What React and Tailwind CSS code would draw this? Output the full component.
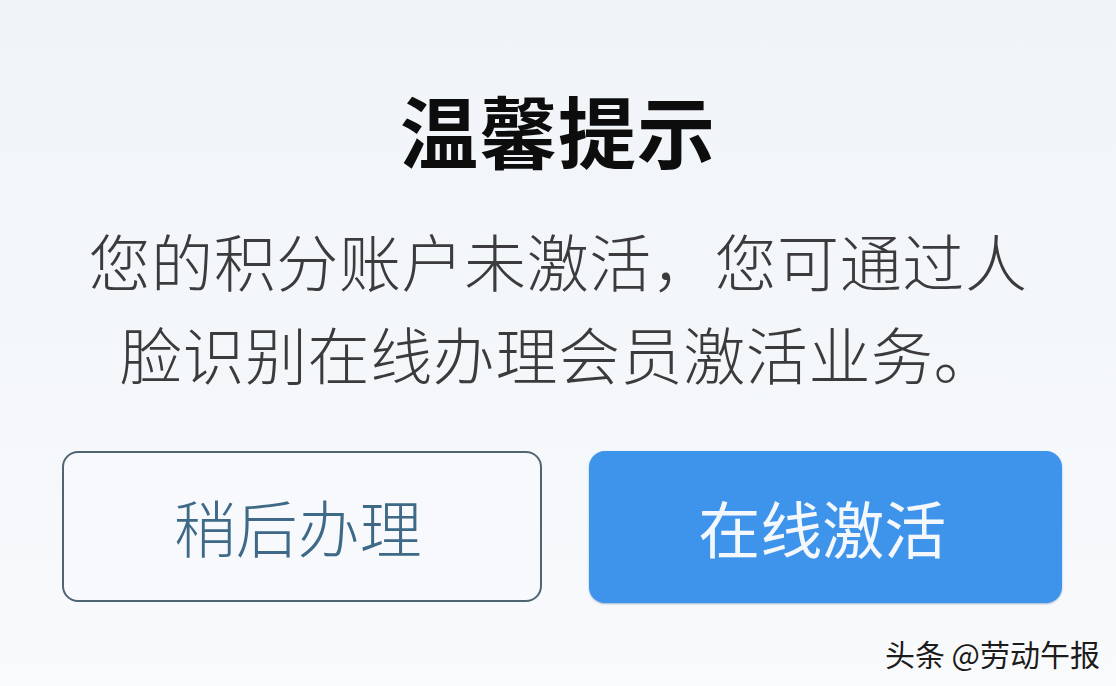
import React from 'react';

const cjk = { fontFamily: '"Noto Sans CJK SC", "Noto Sans", sans-serif' };

export default function App() {
  return (
    <div
      className="relative w-full h-[686px] overflow-hidden bg-gradient-to-b from-[#f0f4f8] to-[#f8fafc]"
      style={cjk}
    >
      <div className="flex flex-col items-center pt-[90px]">
        <h1 className="text-[78px] leading-none font-bold text-[#0d0d0d] tracking-[1px]">温馨提示</h1>
        <p className="mt-[46px] w-[980px] text-center text-[62px] leading-[93px] tracking-[0.6px] text-[#3b3a3d] font-light">
          您的积分账户未激活，您可通过人脸识别在线办理会员激活业务。
        </p>
      </div>

      <div className="flex gap-[47px] pl-[62px] pr-[54px] mt-[51px]">
        <button className="flex-1 h-[151px] rounded-[16px] border-2 border-[#4f6672] bg-[#f7f9fc] text-[62px] text-[#3e6a88] font-light pr-[8px]">
          稍后办理
        </button>
        <button className="flex-1 h-[152px] rounded-[16px] bg-[#3d94ea] text-[62px] text-[#f4f8fc] shadow-[0_1px_2px_rgba(30,80,140,0.4)] pr-[6px]">
          在线激活
        </button>
      </div>

      <div className="absolute right-[16px] bottom-[18px] text-[30px] leading-none text-[#1c1c1c] [text-shadow:0_0_3px_#ffffff,0_0_3px_#ffffff]">
        头条 @劳动午报
      </div>
    </div>
  );
}
